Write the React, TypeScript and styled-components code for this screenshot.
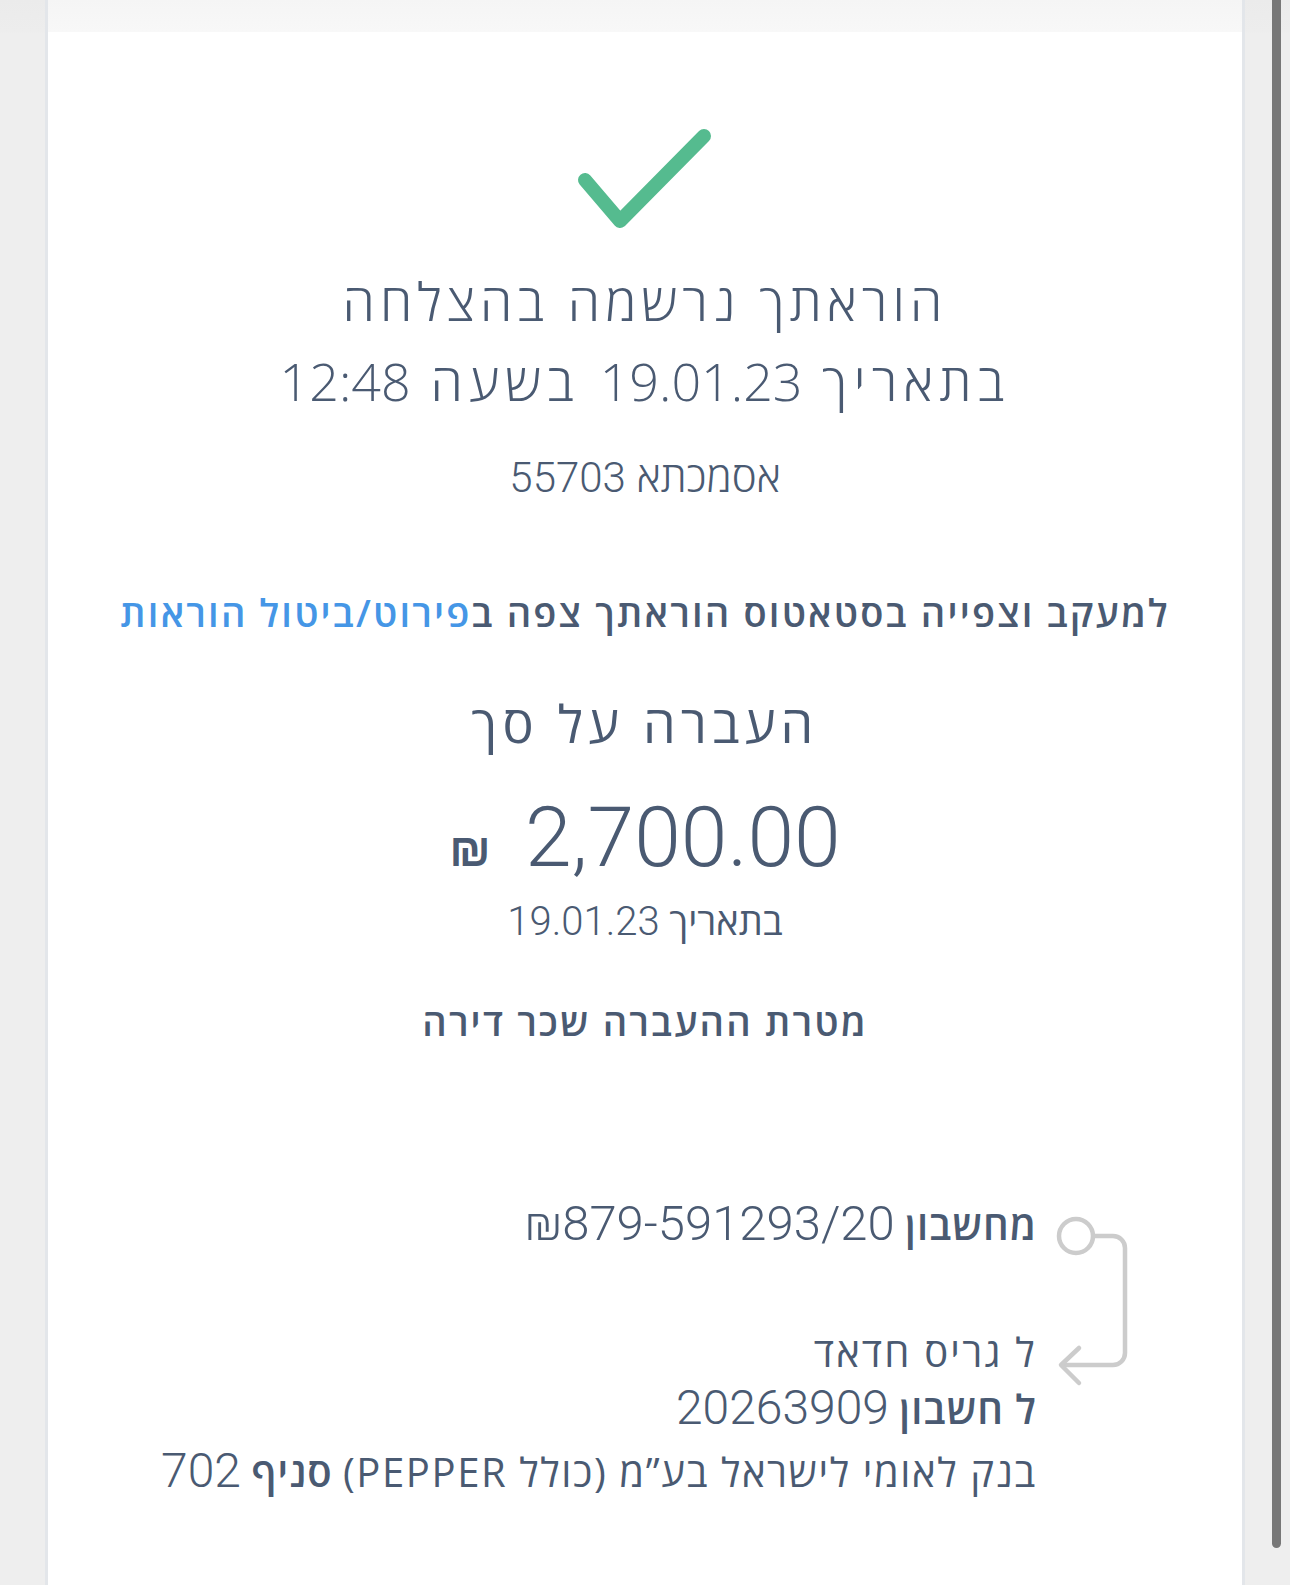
import React from "react";
import styled, { createGlobalStyle } from "styled-components";

const GlobalStyle = createGlobalStyle`
  html, body {
    margin: 0;
    padding: 0;
    width: 1290px;
    height: 1585px;
    overflow: hidden;
    background: #eeeeee;
  }
  body {
    font-family: "Open Sans", "Liberation Sans", sans-serif;
  }
`;

const Page = styled.div`
  display: flex;
  width: 1290px;
  height: 1585px;
  background: #eeeeee;
`;

const Gutter = styled.div`
  width: 45px;
  flex-shrink: 0;
  background: linear-gradient(#ebebeb 0, #ededed 32px, #eeeeee 33px);
`;

const ScrollGutter = styled(Gutter)`
  display: flex;
  padding-left: 27px;
  box-sizing: border-box;
`;

const ScrollThumb = styled.div`
  width: 9px;
  height: 1548px;
  background: #777777;
  border-radius: 0 0 5px 5px;
`;

const Card = styled.div`
  flex: 1;
  display: flex;
  flex-direction: column;
  background: #ffffff;
  border-left: 3px solid #e3e6ea;
  border-right: 3px solid #e3e6ea;
`;

const HeaderStrip = styled.div`
  height: 32px;
  flex-shrink: 0;
  background: linear-gradient(#f5f5f5, #f8f8f8);
`;

const Content = styled.div`
  direction: rtl;
  display: flex;
  flex-direction: column;
  align-items: center;
  color: #4a5a72;
`;

const CheckIcon = styled.svg`
  margin-top: 90px;
  width: 150px;
  height: 120px;
  display: block;
`;

const Title = styled.div`
  margin-top: 19px;
  font-family: "Open Sans", "Liberation Sans", sans-serif;
  font-weight: 300;
  font-size: 52px;
  line-height: 80px;
  text-align: center;
`;

const TitleLine = styled.div<{ $ls?: number }>`
  letter-spacing: ${(p) => p.$ls ?? 5.2}px;
`;

const TitleNum = styled.span`
  letter-spacing: 0;
`;

const Reference = styled.div`
  margin-top: 25px;
  font-size: 42px;
  line-height: 60px;
  font-weight: 300;
`;

const Num = styled.span<{ $size?: number }>`
  font-family: Roboto, "Liberation Sans", sans-serif;
  font-weight: 300;
  letter-spacing: 0;
  ${(p) => (p.$size ? `font-size: ${p.$size}px;` : "")}
`;

const Strong = styled.span<{ $w?: number; $ls?: number }>`
  font-family: "Open Sans", "Liberation Sans", sans-serif;
  font-weight: ${(p) => p.$w ?? 600};
  letter-spacing: ${(p) => p.$ls ?? 0}px;
`;

const TrackLine = styled.div`
  margin-top: 74px;
  font-size: 38px;
  line-height: 60px;
  font-weight: 600;
  letter-spacing: 2.2px;
`;

const Link = styled.a`
  color: #4596e6;
  text-decoration: none;
`;

const SubTitle = styled.div`
  margin-top: 46px;
  font-size: 52px;
  line-height: 70px;
  font-weight: 400;
  letter-spacing: 5.3px;
`;

const AmountRow = styled.div`
  margin-top: 35px;
  direction: ltr;
  display: flex;
  align-items: baseline;
  gap: 34px;
  line-height: 90px;
`;

const Shekel = styled.span`
  font-family: "Liberation Sans", "Open Sans", sans-serif;
  font-weight: 700;
  font-size: 47px;
`;

const Amount = styled.span`
  font-family: Roboto, "Liberation Sans", sans-serif;
  font-weight: 300;
  font-size: 84px;
`;

const DateLine = styled.div`
  margin-top: 0;
  font-size: 38px;
  line-height: 50px;
`;

const Purpose = styled.div`
  margin-top: 46px;
  font-size: 38px;
  line-height: 56px;
  font-weight: 600;
  letter-spacing: 2.2px;
`;

const AccountBlock = styled.div`
  margin-top: 147px;
  display: flex;
  align-items: flex-start;
  gap: 18px;
`;

const FlowIcon = styled.svg`
  width: 74px;
  height: 180px;
  margin-top: 19px;
  display: block;
  flex-shrink: 0;
`;

const AccountLines = styled.div`
  display: flex;
  flex-direction: column;
  align-items: flex-start;
`;

const AccountLine = styled.div<{ $gap?: number }>`
  font-size: 40px;
  line-height: 56px;
  white-space: nowrap;
  margin-top: ${(p) => p.$gap ?? 0}px;
`;

const LtrValue = styled.span<{ $size?: number }>`
  direction: ltr;
  unicode-bidi: isolate;
  font-family: Roboto, "Liberation Sans", sans-serif;
  font-weight: 300;
  font-size: ${(p) => p.$size ?? 48}px;
`;

export default function App() {
  return (
    <>
      <GlobalStyle />
      <Page>
        <Gutter />
        <Card>
          <HeaderStrip />
          <Content>
            <CheckIcon viewBox="0 0 150 120">
              <polyline
                points="15,58 50,99 134,14"
                fill="none"
                stroke="#55bb8f"
                strokeWidth="14"
                strokeLinecap="round"
                strokeLinejoin="round"
              />
            </CheckIcon>
            <Title>
              <TitleLine>הוראתך נרשמה בהצלחה</TitleLine>
              <TitleLine $ls={6.3}>
                בתאריך <TitleNum>19.01.23</TitleNum> בשעה <TitleNum>12:48</TitleNum>
              </TitleLine>
            </Title>
            <Reference>
              אסמכתא <Num>55703</Num>
            </Reference>
            <TrackLine>
              למעקב וצפייה בסטאטוס הוראתך צפה ב
              <Link href="#">פירוט/ביטול הוראות</Link>
            </TrackLine>
            <SubTitle>העברה על סך</SubTitle>
            <AmountRow>
              <Shekel>₪</Shekel>
              <Amount>2,700.00</Amount>
            </AmountRow>
            <DateLine>
              <Strong $w={500}>בתאריך</Strong> <Num $size={40}>19.01.23</Num>
            </DateLine>
            <Purpose>מטרת ההעברה שכר דירה</Purpose>
            <AccountBlock>
              <FlowIcon viewBox="0 0 74 180">
                <circle cx="21" cy="21" r="17" fill="none" stroke="#cccccc" strokeWidth="4.5" />
                <path
                  d="M38 21 H58 a12 12 0 0 1 12 12 V138 a12 12 0 0 1 -12 12 H7"
                  fill="none"
                  stroke="#cccccc"
                  strokeWidth="4.5"
                />
                <path
                  d="M24 133 L6 150 L24 168"
                  fill="none"
                  stroke="#cccccc"
                  strokeWidth="4.5"
                  strokeLinecap="round"
                  strokeLinejoin="round"
                />
              </FlowIcon>
              <AccountLines>
                <AccountLine>
                  <Strong $ls={1}>מחשבון</Strong> <LtrValue $size={49}>₪879-591293/20</LtrValue>
                </AccountLine>
                <AccountLine $gap={71}>
                  <Strong $w={500} $ls={2.2}>ל גריס חדאד</Strong>
                </AccountLine>
                <AccountLine>
                  <Strong $ls={1}>ל חשבון</Strong> <LtrValue>20263909</LtrValue>
                </AccountLine>
                <AccountLine $gap={6}>
                  <Strong $w={500} $ls={1.6}>בנק לאומי לישראל בע”מ (כולל PEPPER)</Strong>{" "}
                  <Strong $ls={1}>סניף</Strong> <LtrValue>702</LtrValue>
                </AccountLine>
              </AccountLines>
            </AccountBlock>
          </Content>
        </Card>
        <ScrollGutter>
          <ScrollThumb />
        </ScrollGutter>
      </Page>
    </>
  );
}
